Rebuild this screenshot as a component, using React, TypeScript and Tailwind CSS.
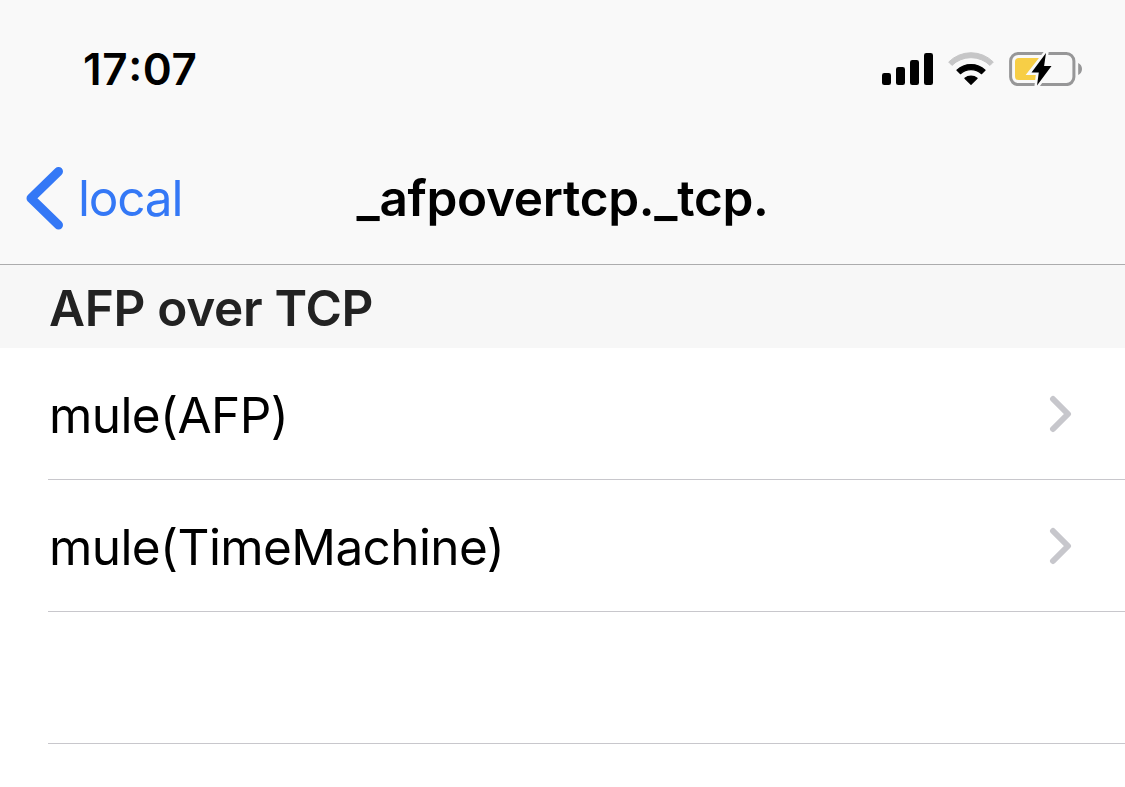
import { useState } from "react";

interface Service {
  name: string;
}

const services: Service[] = [{ name: "mule(AFP)" }, { name: "mule(TimeMachine)" }];

function SignalIcon() {
  return (
    <svg width="52" height="34" viewBox="0 0 52 34" aria-hidden="true">
      <rect x="0" y="21" width="9" height="12" rx="2.3" />
      <rect x="14" y="15" width="9" height="18" rx="2.3" />
      <rect x="28" y="8" width="9" height="25" rx="2.3" />
      <rect x="42" y="1" width="9" height="32" rx="2.3" />
    </svg>
  );
}

function WifiIcon() {
  return (
    <svg width="46" height="34" viewBox="0 0 46 34" strokeLinejoin="round" aria-hidden="true">
      <path
        d="M.7 10A31.5 31.5 0 0 1 45.3 10L42 13.4A27.2 27.2 0 0 0 4 13.4Z"
        fill="#c6c6c7"
        stroke="#c6c6c7"
        strokeWidth="1"
      />
      <path d="M8.9 18.2A20.4 20.4 0 0 1 37.1 18.2L33.6 21.7A15.6 15.6 0 0 0 12.4 21.7Z" stroke="#000" strokeWidth="1.2" />
      <path d="M16.9 26.3A9.5 9.5 0 0 1 29.1 26.3L23 32.3Z" stroke="#000" strokeWidth="1.2" />
    </svg>
  );
}

function BatteryIcon() {
  return (
    <svg width="74" height="34" viewBox="0 0 74 34" aria-hidden="true">
      <rect x="1.6" y="1.6" width="63.3" height="31" rx="7.5" fill="none" stroke="#979798" strokeWidth="3" />
      <path d="M69.2 11C71.4 12 73 14.2 73 17S71.4 22 69.2 23Z" fill="#979798" />
      <path d="M9.8 6H33V28H9.8A3.8 3.8 0 0 1 6 24.2V9.8A3.8 3.8 0 0 1 9.8 6Z" fill="#f7ce46" />
      <path d="M37 1L21.8 20.4H29.6L28 33.8L42.2 14.4H35Z" fill="#f9f9f9" stroke="#f9f9f9" strokeWidth="5" />
      <path d="M37 1L22.5 20.6H29.8L28 33.6L42.5 14.1H35.1Z" />
    </svg>
  );
}

function ServiceRow({ name, onClick }: { name: string; onClick: () => void }) {
  return (
    <li className="ml-12 h-[132px] border-b border-[#c8c7cc]">
      <button onClick={onClick} className="flex h-full w-full items-center justify-between pr-[52px] text-left">
        <span className="pt-[3px] pl-px tracking-[-0.6px]">{name}</span>
        <svg width="24" height="38" viewBox="0 0 24 38" fill="none" className="mt-px" aria-hidden="true">
          <path d="M4 4L19 19L4 34" stroke="#c7c7cc" strokeWidth="6" strokeLinecap="round" strokeLinejoin="round" />
        </svg>
      </button>
    </li>
  );
}

export default function App() {
  const [, setSelected] = useState<string | null>(null);

  return (
    <div className="h-[787px] w-full overflow-hidden bg-white font-['Inter',sans-serif] text-[49.5px] leading-[60px] text-black">
      <header className="h-[265px] border-b border-[#acacad] bg-[#f9f9f9]">
        {/* Status bar */}
        <div className="flex h-[132px] items-start justify-between pt-[39px] pr-[42px] pl-[83px]">
          <span className="text-[44px] font-semibold tracking-[0.6px]">
            17<span className="inline-block -translate-y-1">:</span>07
          </span>
          <div className="flex items-center pt-[13px]">
            <SignalIcon />
            <div className="ml-3.5">
              <WifiIcon />
            </div>
            <div className="ml-[15px]">
              <BatteryIcon />
            </div>
          </div>
        </div>

        {/* Navigation bar */}
        <nav className="grid h-[132px] grid-cols-[1fr_auto_1fr] items-center">
          <button className="flex items-center pl-[26px] text-[#3478f6]">
            <svg width="38" height="64" viewBox="0 0 38 64" fill="none" aria-hidden="true">
              <path d="M32.5 5.5L5 32.3L32.5 59" stroke="currentColor" strokeWidth="9" strokeLinecap="round" strokeLinejoin="round" />
            </svg>
            <span className="ml-3.5 tracking-[-1.2px]">local</span>
          </button>
          <h1 className="font-semibold tracking-[-0.3px]">_afpovertcp._tcp.</h1>
        </nav>
      </header>

      <main>
        <h2 className="h-[83px] bg-[#f7f7f7] pt-[13px] pl-[49px] font-semibold tracking-[-0.3px] text-[#222]">AFP over TCP</h2>
        <ul>
          {services.map((service) => (
            <ServiceRow key={service.name} name={service.name} onClick={() => setSelected(service.name)} />
          ))}
          <li className="ml-12 h-[132px] border-b border-[#c8c7cc]" />
        </ul>
      </main>
    </div>
  );
}
